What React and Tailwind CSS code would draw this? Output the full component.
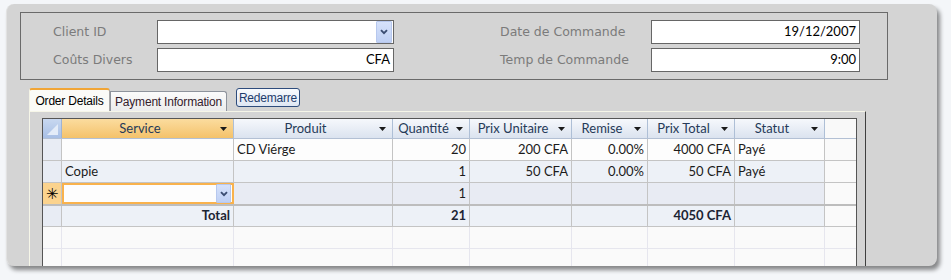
import React from 'react';

const COLS = ['w-[172px]', 'w-[159px]', 'w-[77px]', 'w-[102px]', 'w-[76px]', 'w-[87px]', 'w-[90px]'];
const ALIGN = ['justify-start', 'justify-start', 'justify-end', 'justify-end', 'justify-end', 'justify-end', 'justify-start'];
const HEADERS = ['Service', 'Produit', 'Quantité', 'Prix Unitaire', 'Remise', 'Prix Total', 'Statut'];

const ROWS = [
  { bg: 'bg-[#fdfdfd]', cells: ['', 'CD Viérge', '20', '200 CFA', '0.00%', '4000 CFA', 'Payé'] },
  { bg: 'bg-[#edf1f7]', cells: ['Copie', '', '1', '50 CFA', '0.00%', '50 CFA', 'Payé'] },
];

const GRID_FONT = "font-['Lato','Liberation_Sans',sans-serif] text-[13px]";
const LABEL_FONT = "font-['DejaVu_Sans','Liberation_Sans',sans-serif] text-[12.5px] text-[#7b7b7b]";
const UI_FONT = "font-['Liberation_Sans','Arial',sans-serif] text-[12px] tracking-[-0.2px]";

function FilterArrow() {
  return (
    <svg width="7" height="4" viewBox="0 0 7 4" className="shrink-0 ml-[2px] mr-[6px]">
      <path d="M0 0h7L3.5 4z" fill="#1a1a1a" />
    </svg>
  );
}

function DropButton({ className }) {
  return (
    <div className={'flex items-center justify-center rounded-[1px] bg-gradient-to-b from-[#d6e2fb] to-[#bfd0f4] border border-[#b7c8ee] ' + className}>
      <svg width="8" height="6" viewBox="0 0 8 6">
        <path d="M1 1.2l3 3 3-3" fill="none" stroke="#3b4d72" strokeWidth="1.9" />
      </svg>
    </div>
  );
}

function Field({ label, labelW, inputW, value, combo }) {
  return (
    <div className="flex items-center h-[24px]">
      <div className={labelW + ' ' + LABEL_FONT}>{label}</div>
      <div className={inputW + ' h-[24px] bg-white border border-[#666] flex items-center justify-end pr-[3px] ' + GRID_FONT + ' text-black'}>
        {combo ? <DropButton className="w-[16px] h-[22px] -mr-[2px]" /> : value}
      </div>
    </div>
  );
}

function HeaderRow() {
  return (
    <div className="flex h-[20px] border-b border-[#b3c0d4]">
      <div className="w-[19px] h-full bg-gradient-to-b from-[#c8d8f0] to-[#a8bfe5] border-r border-[#9fb3d3] relative">
        <svg width="18" height="19" viewBox="0 0 18 19" className="absolute left-0 top-0">
          <path d="M4 16L15 5v11z" fill="#e4ecf8" />
        </svg>
      </div>
      {HEADERS.map((h, i) => (
        <div
          key={h}
          className={
            COLS[i] +
            ' h-full flex items-center border-r border-[#aebfd6] text-[#263a58] ' +
            (i === 0 ? 'bg-gradient-to-b from-[#fbdc9e] to-[#f4c26a]' : 'bg-gradient-to-b from-[#f6f8fc] to-[#dbe3ef]')
          }
        >
          <span className="flex-1 text-center whitespace-nowrap">{h}</span>
          <FilterArrow />
        </div>
      ))}
      <div className="flex-1 h-full bg-[#f9f9f9]" />
    </div>
  );
}

function DataRow({ bg, cells }) {
  return (
    <div className="flex h-[22px] border-b border-[#c4c4c4]">
      <div className="w-[19px] h-full bg-[#e8ecf4] border-r border-[#c4c4c4]" />
      {cells.map((c, i) => (
        <div key={i} className={COLS[i] + ' ' + ALIGN[i] + ' ' + bg + ' h-full flex items-center px-[3px] border-r border-[#c4c4c4] text-[#1b1b1b] whitespace-nowrap'}>
          {c}
        </div>
      ))}
      <div className="flex-1 h-full bg-[#fafafa]" />
    </div>
  );
}

function NewRow() {
  return (
    <div className="flex h-[23px] border-b-2 border-[#bdbdbd]">
      <div className="w-[19px] h-full bg-[#fbd38e] border-r border-[#c4c4c4] flex items-center justify-center text-[15px] text-black">✳</div>
      <div className={COLS[0] + ' h-full bg-[#fdfdfd] border-2 border-[#f9b24c] flex items-center justify-end pr-[1px]'}>
        <DropButton className="w-[15px] h-[19px]" />
      </div>
      {['', '1', '', '', '', ''].map((c, i) => (
        <div key={i} className={COLS[i + 1] + ' ' + ALIGN[i + 1] + ' h-full flex items-center px-[3px] bg-[#e8ebf3] border-r border-[#c4c4c4] text-[#1b1b1b]'}>
          {c}
        </div>
      ))}
      <div className="flex-1 h-full bg-[#fafafa]" />
    </div>
  );
}

function TotalRow() {
  const cells = ['Total', '', '21', '', '', '4050 CFA', ''];
  return (
    <div className="flex h-[21px] border-b border-[#c4c4c4]">
      <div className="w-[19px] h-full bg-[#e8ecf4] border-r border-[#c4c4c4]" />
      {cells.map((c, i) => (
        <div key={i} className={COLS[i] + ' h-full flex items-center justify-end px-[3px] bg-[#edf1f7] border-r border-[#c4c4c4] font-bold text-[#1c2433]'}>
          {c}
        </div>
      ))}
      <div className="flex-1 h-full bg-[#fafafa]" />
    </div>
  );
}

function BlankRow() {
  return (
    <div className="flex h-[22px] border-b border-[#e6e6ee] bg-[#fafafa]">
      <div className="w-[19px] h-full border-r border-[#e6e6ee]" />
      {COLS.map((w, i) => (
        <div key={i} className={w + ' h-full border-r border-[#e6e6ee]'} />
      ))}
    </div>
  );
}

export default function App() {
  return (
    <div className="w-[951px] h-[280px] bg-[#f4f6f9] pt-[4px] pl-[6px] overflow-hidden">
      <div className="w-[931px] h-[262px] bg-[#d4d4d4] rounded-[8px] border-l border-[#e2e2e2] shadow-[3px_4px_4px_rgba(0,0,0,0.45)] flex flex-col overflow-hidden">
        {/* Header fields */}
        <div className="ml-[13px] mt-[8px] w-[868px] h-[68px] border border-[#6a6a6a] flex pt-[7px]">
          <div className="flex flex-col gap-[4px] ml-[32px]">
            <Field label="Client ID" labelW="w-[104px]" inputW="w-[237px]" combo />
            <Field label="Coûts Divers" labelW="w-[104px]" inputW="w-[237px]" value="CFA" />
          </div>
          <div className="flex flex-col gap-[4px] ml-[106px]">
            <Field label="Date de Commande" labelW="w-[151px]" inputW="w-[209px]" value="19/12/2007" />
            <Field label="Temp de Commande" labelW="w-[151px]" inputW="w-[209px]" value="9:00" />
          </div>
        </div>

        {/* Tabs */}
        <div className={'ml-[22px] mt-[8px] flex items-start h-[23px] ' + UI_FONT}>
          <div className="w-[81px] h-[23px] rounded-t-[3px] border-t-2 border-t-[#f1a536] border-l border-l-[#f4f4e6] border-r border-r-[#a8a8a8] bg-[#fbfbf7] flex items-center justify-center text-black">
            Order Details
          </div>
          <div className="mt-[3px] w-[117px] h-[20px] rounded-tr-[3px] border border-b-0 border-[#8e939c] bg-gradient-to-b from-[#fbfbfb] to-[#ececec] flex items-center justify-center text-[#34202c] whitespace-nowrap">
            Payment Information
          </div>
          <div className="ml-[9px] w-[64px] h-[19px] rounded-[3px] border border-[#2e4c7c] bg-gradient-to-b from-[#f9fbfe] to-[#dfe7f3] flex items-center justify-center text-[#1d3c6c]">
            Redemarre
          </div>
        </div>

        {/* Tab page */}
        <div className="ml-[22px] w-[837px] flex-1 border-l border-t border-[#f6f6e8] border-r border-r-[#3f3f3f] pl-[12px] pt-[6px] overflow-hidden">
          <div className={'w-[815px] border-l border-t border-r border-[#555] ' + GRID_FONT}>
            <HeaderRow />
            {ROWS.map((r, i) => (
              <DataRow key={i} bg={r.bg} cells={r.cells} />
            ))}
            <NewRow />
            <TotalRow />
            <BlankRow />
            <BlankRow />
          </div>
        </div>
      </div>
    </div>
  );
}
